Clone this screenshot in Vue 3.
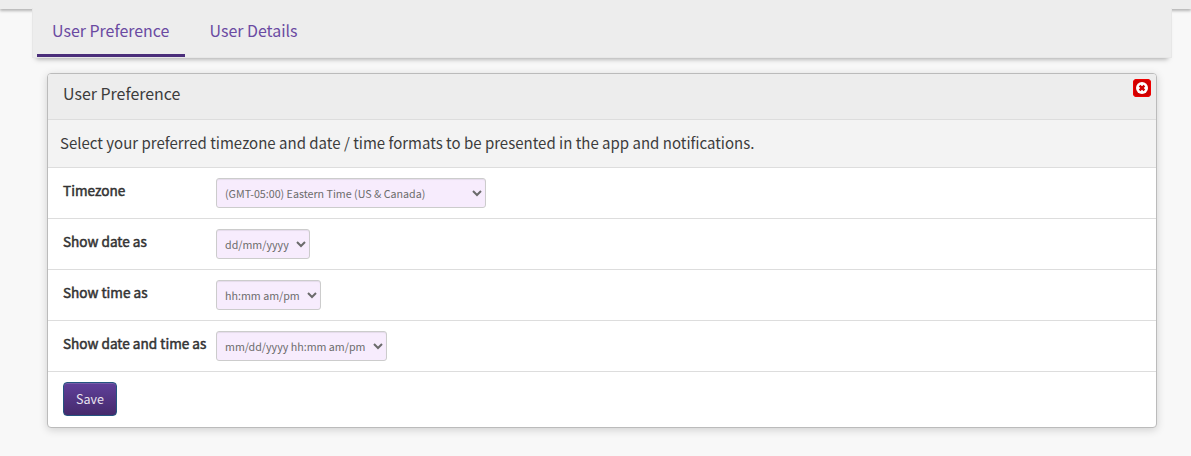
<script setup>
import { ref } from 'vue'

const tabs = ['User Preference', 'User Details']
const active = ref(0)

const rows = ref([
  { id: 'tz', label: 'Timezone', value: '(GMT-05:00) Eastern Time (US & Canada)', size: 'w-zone' },
  { id: 'date', label: 'Show date as', value: 'dd/mm/yyyy', size: 'w-date' },
  { id: 'time', label: 'Show time as', value: 'hh:mm am/pm', size: 'w-time' },
  { id: 'datetime', label: 'Show date and time as', value: 'mm/dd/yyyy hh:mm am/pm', size: 'w-datetime' },
])
</script>

<template>
  <div class="page">
    <div class="topbar"></div>
    <nav class="tabs">
      <a v-for="(t, i) in tabs" :key="t" class="tab" :class="{ active: i === active }" @click="active = i">{{ t }}</a>
    </nav>
    <section class="panel">
      <header class="head">
        <h1>User Preference</h1>
        <button class="close" type="button" aria-label="Close">
          <svg width="18" height="18" viewBox="0 0 18 18">
            <circle cx="9" cy="9" r="6" fill="#fff" />
            <path d="M6.6 6.6l4.8 4.8M11.4 6.6l-4.8 4.8" stroke="#d00000" stroke-width="2.4" />
          </svg>
        </button>
      </header>
      <p class="desc">Select your preferred timezone and date / time formats to be presented in the app and notifications.</p>
      <div v-for="r in rows" :key="r.id" class="row">
        <label :for="r.id">{{ r.label }}</label>
        <select :id="r.id" :class="r.size"><option>{{ r.value }}</option></select>
      </div>
      <div class="actions"><button class="save" type="button">Save</button></div>
    </section>
  </div>
</template>

<style>
body { background: #f8f8f8; }
</style>

<style scoped>
* { box-sizing: border-box; }
.page {
  height: 456px;
  overflow: hidden;
  background: #f8f8f8;
  font-family: "Noto Sans CJK SC", "Noto Sans CJK JP", sans-serif;
  color: #3c3c3c;
}
.topbar {
  height: 9px;
  background: #ededed;
  box-shadow: 0 2px 3px rgba(0, 0, 0, .27);
}
.tabs {
  position: relative;
  display: flex;
  height: 50px;
  margin: -1px 19px 0 32px;
  padding-left: 4px;
  background: #ededed;
  border: 1px solid #e7e7e7;
  border-top: 0;
  box-shadow: 0 5px 5px -4px rgba(0, 0, 0, .34);
}
.tab {
  height: 49px;
  padding: 0 15px;
  border-bottom: 3px solid transparent;
  color: #6a4aa2;
  font-size: 15.95px;
  line-height: 44px;
  white-space: nowrap;
  cursor: pointer;
}
.tab + .tab { margin-left: 9.5px; }
.tab.active { width: 148px; border-bottom-color: #4b2e7b; }
.panel {
  height: 355px;
  margin: 15px 34px 0 47px;
  background: #fff;
  border: 1px solid #bbb;
  border-radius: 4px;
  overflow: hidden;
  box-shadow: 0 2px 8px rgba(0, 0, 0, .16);
}
.head {
  display: flex;
  justify-content: space-between;
  height: 46px;
  padding: 5px 5px 0 15px;
  background: #ededed;
  border-bottom: 1px solid #ddd;
}
h1 {
  margin: 0;
  font-size: 15.95px;
  font-weight: 400;
  line-height: 28px;
}
.close {
  display: block;
  width: 18px;
  height: 18px;
  padding: 0;
  border: 0;
  border-radius: 4px;
  background: #d00000;
  box-shadow: inset 0 0 0 1px #f00000;
}
.close svg { display: block; }
.desc {
  height: 48px;
  margin: 0;
  padding-left: 12px;
  background: #f3f3f3;
  border-bottom: 1px solid #ddd;
  font-size: 15px;
  line-height: 45px;
  white-space: nowrap;
}
.row {
  display: flex;
  height: 51px;
  padding: 10px 15px;
  border-bottom: 1px solid #ddd;
}
label {
  width: 153px;
  color: #333;
  font-size: 13.6px;
  line-height: 24px;
  white-space: nowrap;
  -webkit-text-stroke: .5px #333;
}
select {
  height: 30px;
  padding: 5px 4px;
  border: 1px solid #ccc;
  border-radius: 3px;
  background: #f7ecfd;
  color: #6b6b6b;
  font-family: inherit;
  font-size: 10.7px;
  line-height: 18px;
  box-shadow: inset 0 1px 1px rgba(0, 0, 0, .075);
}
.w-zone { width: 270px; }
.w-date { width: 94px; }
.w-time { width: 105px; }
.w-datetime { width: 171px; }
.actions { padding: 10px 15px; }
.save {
  display: block;
  width: 54px;
  height: 34px;
  padding: 0;
  border: 1px solid #245580;
  border-radius: 4px;
  background: linear-gradient(#60409a, #452a6c);
  box-shadow: inset 0 1px 0 rgba(255, 255, 255, .15);
  color: #e8e4ef;
  font-family: inherit;
  font-size: 12.5px;
  line-height: 30px;
}
</style>
